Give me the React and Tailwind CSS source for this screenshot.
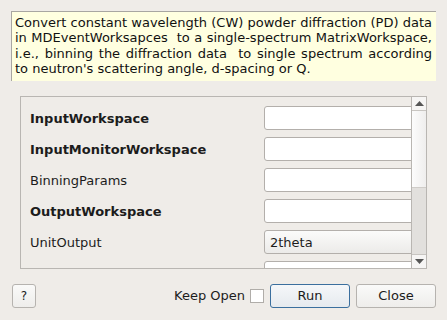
import React from "react";

const font = { fontFamily: '"DejaVu Sans", sans-serif' };

function TextInput() {
  return <div className="h-[24px] w-[170px] shrink-0 rounded-[3px] border border-[#b3afab] bg-white" />;
}

function Row({ label, bold, children }) {
  return (
    <div className="flex h-[24px] items-center">
      <div className={`w-[234px] shrink-0 pt-[1px] text-[13px] text-[#1c1c1c] ${bold ? "font-bold" : ""}`}>{label}</div>
      {children}
    </div>
  );
}

export default function App() {
  return (
    <div className="flex h-[320px] w-[447px] flex-col bg-[#efece8]" style={font}>
      <div className="mx-[11px] mt-[11px] h-[70px] border-l border-t border-l-[#a8a6a2] border-t-[#a8a6a2] bg-[#ffffe0] pl-[3px] pr-[4px] pt-[3px] text-justify text-[13px] leading-[15.3px] text-[#111]">
        Convert constant wavelength (CW) powder diffraction (PD) data in MDEventWorksapces&nbsp; to a single-spectrum MatrixWorkspace, i.e., binning the diffraction data&nbsp; to single spectrum according to neutron's scattering angle, d-spacing or Q.
      </div>
      <div className="ml-[20px] mt-[15px] flex h-[173px] w-[407px] border border-[#b9b6b2]">
        <div className="flex flex-1 flex-col gap-[7px] overflow-hidden pl-[9px] pt-[9px]">
          <Row label="InputWorkspace" bold><TextInput /></Row>
          <Row label="InputMonitorWorkspace" bold><TextInput /></Row>
          <Row label="BinningParams"><TextInput /></Row>
          <Row label="OutputWorkspace" bold><TextInput /></Row>
          <Row label="UnitOutput">
            <div className="flex h-[24px] w-[170px] shrink-0 items-center rounded-[3px] border border-[#b3afab] bg-gradient-to-b from-[#fbfbfa] to-[#ecebe9] pl-[5px] pt-[1px] text-[13px] text-[#1c1c1c]">
              2theta
            </div>
          </Row>
          <Row label=""><TextInput /></Row>
        </div>
        <div className="flex w-[15px] shrink-0 flex-col border-l border-[#b9b6b2]">
          <div className="flex h-[14px] items-center justify-center border-b border-[#c8c5c1] bg-[#f6f5f4]">
            <svg width="9" height="5" viewBox="0 0 9 5"><path d="M0 5 L4.5 0 L9 5 Z" fill="#555" /></svg>
          </div>
          <div className="h-[77px] border-b border-[#cfccc8] bg-gradient-to-r from-[#fcfcfc] to-[#efeeed]" />
          <div className="flex-1 bg-[#e2e0dd]" />
          <div className="flex h-[14px] items-center justify-center border-t border-[#c8c5c1] bg-[#f6f5f4]">
            <svg width="9" height="5" viewBox="0 0 9 5"><path d="M0 0 L9 0 L4.5 5 Z" fill="#555" /></svg>
          </div>
        </div>
      </div>
      <div className="mt-[15px] flex h-[24px] items-center pl-[12px] pr-[11px] text-[13px] text-[#1c1c1c]">
        <div className="flex h-[24px] w-[24px] items-center justify-center rounded-[3px] border border-[#b6b3af] bg-gradient-to-b from-[#fafaf9] to-[#eeedeb] text-[12px]">?</div>
        <div className="flex-1" />
        <span className="mr-[5px]">Keep Open</span>
        <div className="mr-[6px] h-[14px] w-[14px] border border-[#b0ada9] bg-white" />
        <div className="flex h-[24px] w-[80px] items-center justify-center rounded-[3px] border border-[#3b6f9e] bg-gradient-to-b from-[#f5f7f9] to-[#e6eaee]">Run</div>
        <div className="ml-[6px] flex h-[24px] w-[80px] items-center justify-center rounded-[3px] border border-[#b6b3af] bg-gradient-to-b from-[#fafaf9] to-[#eeedeb]">Close</div>
      </div>
    </div>
  );
}
